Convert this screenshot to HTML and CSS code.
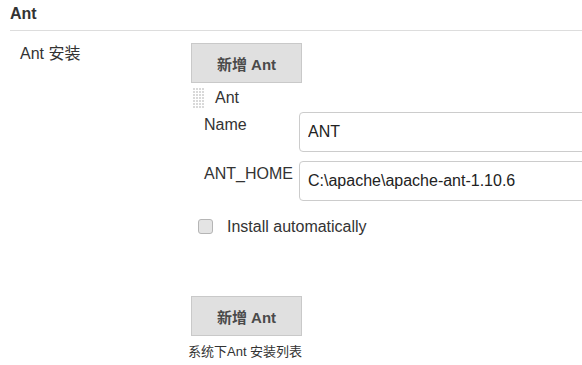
FILE: index.html
```html
<!DOCTYPE html>
<html lang="zh">
<head>
  <meta charset="UTF-8">
  <title>Ant</title>
  <link rel="stylesheet" href="styles.css">
</head>
<body>
  <h2 class="section-title">Ant</h2>

  <!-- Ant installations -->
  <div class="setting">
    <div class="setting-name">Ant 安装</div>
    <div class="setting-main">
      <button type="button" class="btn">新增 Ant</button>

      <div class="chunk">
        <div class="chunk-header">
          <span class="grip"></span>
          <span class="chunk-title">Ant</span>
        </div>

        <div class="field">
          <label class="field-label" for="antName">Name</label>
          <input class="field-input" type="text" id="antName" value="ANT">
        </div>
        <div class="field">
          <label class="field-label" for="antHome">ANT_HOME</label>
          <input class="field-input" type="text" id="antHome" value="C:\apache\apache-ant-1.10.6">
        </div>

        <div class="check-row">
          <input class="check" type="checkbox" id="autoInstall">
          <label for="autoInstall">Install automatically</label>
        </div>
      </div>

      <button type="button" class="btn btn-add">新增 Ant</button>
      <div class="description">系统下Ant 安装列表</div>
    </div>
  </div>
</body>
</html>
```

FILE: styles.css
```css
html, body {
  overflow: hidden;
}
body {
  margin: 0;
  font-family: "Liberation Sans", Arial, "Noto Sans CJK SC", sans-serif;
  font-size: 16px;
  line-height: 20px;
  color: #333;
  background-color: #fff;
}
.section-title {
  margin: 0 0 0 10px;
  padding: 4px 0 6px;
  font-size: 16px;
  line-height: 20px;
  font-weight: bold;
  border-bottom: 1px solid #ddd;
}
.setting {
  display: flex;
  margin-top: 12px;
}
.setting-name {
  box-sizing: border-box;
  flex-shrink: 0;
  width: 191px;
  padding: 1px 0 0 20px;
}
.setting-main {
  flex: 1;
  min-width: 0;
}
.btn {
  display: block;
  box-sizing: border-box;
  width: 111px;
  height: 40px;
  padding: 0;
  background-color: #e0e0e0;
  border: 1px solid #c9c9c9;
  color: #4a4a4a;
  font-family: inherit;
  font-size: 15px;
  font-weight: bold;
  cursor: pointer;
}
.btn:hover {
  background-color: #d6d6d6;
}
.chunk {
  margin-top: 4px;
  overflow: hidden;
}
.chunk-header {
  display: flex;
  align-items: center;
  height: 21px;
}
.grip {
  width: 13px;
  height: 21px;
  margin-left: 1px;
  background-color: #d9d9d9;
  background-image: linear-gradient(90deg, #fff 1px, transparent 1px),
                    linear-gradient(#fff 1px, transparent 1px);
  background-size: 3px 3px;
}
.chunk-title {
  margin-left: 10px;
}
.field {
  display: flex;
  margin: 4px 0 0 13px;
}
.field + .field {
  margin-top: 9px;
}
.field-label {
  flex-shrink: 0;
  width: 95px;
  padding-top: 3px;
}
.field-input {
  box-sizing: border-box;
  flex-shrink: 0;
  width: 340px;
  height: 40px;
  padding: 0 8px;
  border: 1px solid #ccc;
  border-radius: 4px;
  font-family: inherit;
  font-size: 16px;
  color: #222;
}
.check-row {
  display: flex;
  align-items: center;
  margin: 14px 0 0 7px;
}
.check {
  appearance: none;
  -webkit-appearance: none;
  box-sizing: border-box;
  flex-shrink: 0;
  width: 15px;
  height: 15px;
  margin: 0 14px 0 0;
  background-color: #e4e4e4;
  border: 1px solid #b5b5b5;
  border-radius: 3px;
}
.check-row label {
  padding-top: 2px;
}
.btn-add {
  margin-top: 59px;
}
.description {
  margin: 8px 0 0 -3px;
  font-size: 13px;
  line-height: 16px;
}
```
